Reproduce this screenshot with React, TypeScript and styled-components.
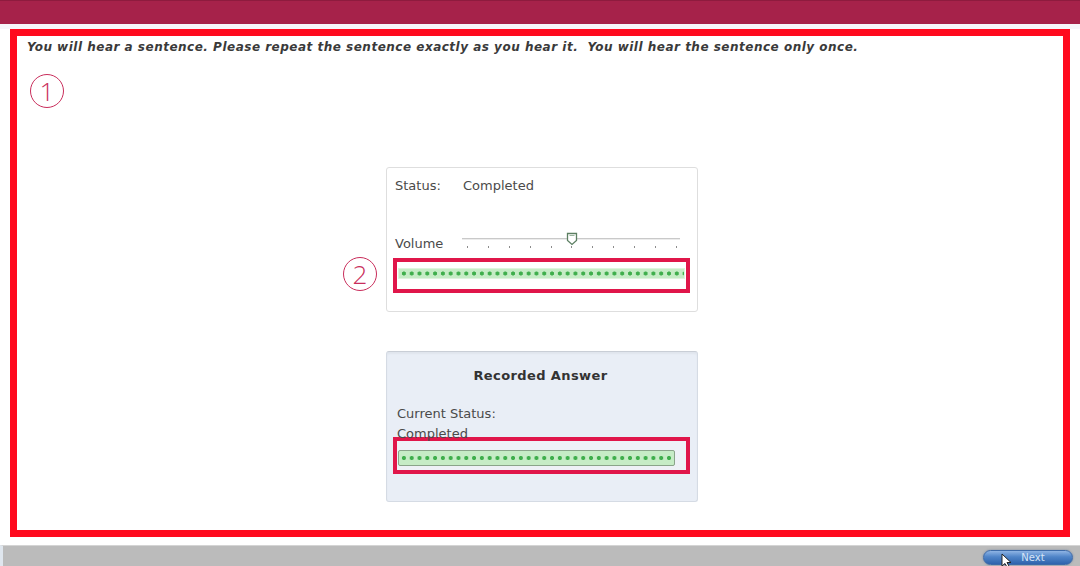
import React from "react";
import styled, { createGlobalStyle } from "styled-components";

const GlobalStyle = createGlobalStyle`
	html, body {
		margin: 0;
		padding: 0;
		background: #ffffff;
	}
	body {
		font-family: "DejaVu Sans", Verdana, sans-serif;
	}
`;

const Page = styled.div`
	width: 1080px;
	height: 566px;
	display: flex;
	flex-direction: column;
	overflow: hidden;
	background: #ffffff;
`;

const TopBar = styled.div`
	height: 24px;
	flex: none;
	background: #a6224a;
	border-top: 1px solid #8e1b3e;
	box-sizing: border-box;
`;

const Strip = styled.div`
	height: 5px;
	flex: none;
	background: #f6f6fa;
`;

const Frame = styled.div`
	flex: none;
	height: 508px;
	margin: 0 10px;
	border: 7px solid #ff0a1e;
	box-sizing: border-box;
	display: flex;
	flex-direction: column;
	padding: 5px 10px 0;
	background: #ffffff;
`;

const Instruction = styled.p`
	margin: 0;
	font-family: "DejaVu Sans", Verdana, sans-serif;
	font-weight: bold;
	font-style: italic;
	font-size: 12px;
	line-height: 13px;
	color: #3a3a3a;
	letter-spacing: 0.5px;
	white-space: nowrap;
`;

const Marker = styled.span`
	width: 34px;
	height: 34px;
	border: 1.5px solid #c92d5b;
	border-radius: 50%;
	display: flex;
	align-items: center;
	justify-content: center;
	font-family: "Open Sans", "Liberation Sans", sans-serif;
	font-weight: 300;
	font-size: 26px;
	color: #c92d5b;
	box-sizing: border-box;
	flex: none;
`;

const FirstMarker = styled(Marker)`
	margin: 20px 0 0 3px;
`;

const Stack = styled.div`
	align-self: center;
	margin: 59px 0 0 4px;
	width: 312px;
	display: flex;
	flex-direction: column;
	gap: 39px;
`;

const Card = styled.div<{ $tinted?: boolean }>`
	position: relative;
	box-sizing: border-box;
	border: 1px solid ${(p) => (p.$tinted ? "#d5dbe4" : "#dedede")};
	border-top-color: ${(p) => (p.$tinted ? "#c9ced6" : "#dedede")};
	border-radius: 3px;
	background: ${(p) => (p.$tinted ? "#e9eef6" : "#ffffff")};
	color: #4a4a4a;
	font-size: 13px;
	line-height: 16px;
`;

const PlayerCard = styled(Card)`
	height: 145px;
	padding: 10px 8px 0 5px;
`;

const AnswerCard = styled(Card)`
	height: 151px;
	padding: 16px 8px 0 5px;
	box-shadow: inset 0 2px 2px rgba(0, 0, 0, 0.04);
`;

const SideMarker = styled(Marker)`
	position: absolute;
	left: -44px;
	top: 89px;
`;

const Row = styled.div`
	display: flex;
	align-items: center;
	padding-left: 3px;
`;

const Label = styled.span`
	width: 68px;
	flex: none;
`;

const VolumeRow = styled(Row)`
	margin-top: 40px;
	align-items: flex-start;
`;

const VolumeLabel = styled(Label)`
	padding-top: 2px;
`;

const Slider = styled.div`
	position: relative;
	width: 218px;
	height: 20px;
	margin-left: -1px;
`;

const Track = styled.div`
	position: absolute;
	left: 0;
	right: 0;
	top: 4px;
	height: 1px;
	background: #c9c9c9;
	border-bottom: 1px solid #ececec;
`;

const Ticks = styled.div`
	position: absolute;
	left: 5px;
	right: 3px;
	top: 12px;
	display: flex;
	justify-content: space-between;
`;

const Tick = styled.span`
	width: 1px;
	height: 2px;
	background: #8c8c8c;
`;

const Thumb = styled.svg`
	position: absolute;
	left: 104px;
	top: -2px;
`;

const Highlight = styled.div<{ $top: number }>`
	box-sizing: border-box;
	margin: ${(p) => p.$top}px 0 0 1px;
	width: 297px;
	border: 4px solid #e0164a;
	background: #ffffff;
`;

const MeterBox = styled(Highlight)`
	height: 35px;
	padding: 6px 1px 0;
`;

const AnswerBox = styled(Highlight)`
	height: 37px;
	padding: 9px 1px 0;
	background: #eef1f7;
`;

const Meter = styled.div<{ $w: number; $h: number; $framed?: boolean }>`
	width: ${(p) => p.$w}px;
	height: ${(p) => p.$h}px;
	box-sizing: border-box;
	background-color: #c6ecc6;
	background-image: radial-gradient(circle, #3fae4c 1.7px, rgba(63, 174, 76, 0) 2.4px);
	background-size: 7.8px 100%;
	background-position: 1px 0;
	border: 1px solid ${(p) => (p.$framed ? "#8aa48a" : "#dff3df")};
	border-radius: ${(p) => (p.$framed ? 2 : 0)}px;
`;

const Title = styled.div`
	text-align: center;
	font-weight: bold;
	font-size: 13px;
	letter-spacing: 0.4px;
	color: #333333;
	margin-bottom: 20px;
`;

const StatusLine = styled.div`
	padding-left: 5px;
	line-height: 20px;
`;

const Footer = styled.div`
	margin-top: 8px;
	flex: 1;
	background: #bbbbbb;
	border-top: 1px solid #d4d4d4;
	border-left: 3px solid #dfe6ee;
	display: flex;
	justify-content: flex-end;
	align-items: center;
	padding-right: 7px;
`;

const NextButton = styled.button`
	position: relative;
	width: 90px;
	height: 15px;
	border: 1px solid #3d6aa8;
	border-radius: 8px;
	background: linear-gradient(#8fb4e4, #4f84c8 45%, #2f63ad);
	color: #d6e4f6;
	font-family: "DejaVu Sans", Verdana, sans-serif;
	font-size: 10px;
	line-height: 13px;
	padding: 0 0 0 10px;
	margin-top: 2px;
	box-shadow: 0 0 2px rgba(40, 80, 140, 0.5);
`;

const Cursor = styled.svg`
	position: absolute;
	left: 17px;
	top: 2px;
`;

function DotMeter({ w, h, framed }: { w: number; h: number; framed?: boolean }) {
	return <Meter $w={w} $h={h} $framed={framed} />;
}

export default function App() {
	const ticks = Array.from({ length: 11 });
	return (
		<>
			<GlobalStyle />
			<Page>
				<TopBar />
				<Strip />
				<Frame>
					<Instruction>
						You will hear a sentence. Please repeat the sentence exactly as you hear it.&nbsp; You
						will hear the sentence only once.
					</Instruction>
					<FirstMarker>1</FirstMarker>
					<Stack>
						<PlayerCard>
							<SideMarker>2</SideMarker>
							<Row>
								<Label>Status:</Label>
								<span>Completed</span>
							</Row>
							<VolumeRow>
								<VolumeLabel>Volume</VolumeLabel>
								<Slider>
									<Track />
									<Ticks>
										{ticks.map((_, i) => (
											<Tick key={i} />
										))}
									</Ticks>
									<Thumb width="12" height="14" viewBox="0 0 12 14">
										<path
											d="M1.5 1.5 H10.5 V8.5 L6 12.5 L1.5 8.5 Z"
											fill="#ffffff"
											stroke="#5c7f62"
											strokeWidth="1.3"
										/>
										<path d="M3.5 3.5 H8.5" stroke="#9bb59f" strokeWidth="1" />
									</Thumb>
								</Slider>
							</VolumeRow>
							<MeterBox $top={4}>
								<DotMeter w={287} h={11} />
							</MeterBox>
						</PlayerCard>
						<AnswerCard $tinted>
							<Title>Recorded Answer</Title>
							<StatusLine>Current Status:</StatusLine>
							<StatusLine>Completed</StatusLine>
							<AnswerBox $top={-7}>
								<DotMeter w={277} h={16} framed />
							</AnswerBox>
						</AnswerCard>
					</Stack>
				</Frame>
				<Footer>
					<NextButton type="button">
						Next
						<Cursor width="12" height="16" viewBox="0 0 12 16">
							<path
								d="M1 1 L1 13 L4 10.5 L6.5 15 L8.5 14 L6 9.5 L10 9.5 Z"
								fill="#ffffff"
								stroke="#222222"
								strokeWidth="1"
								strokeLinejoin="round"
							/>
						</Cursor>
					</NextButton>
				</Footer>
			</Page>
		</>
	);
}
